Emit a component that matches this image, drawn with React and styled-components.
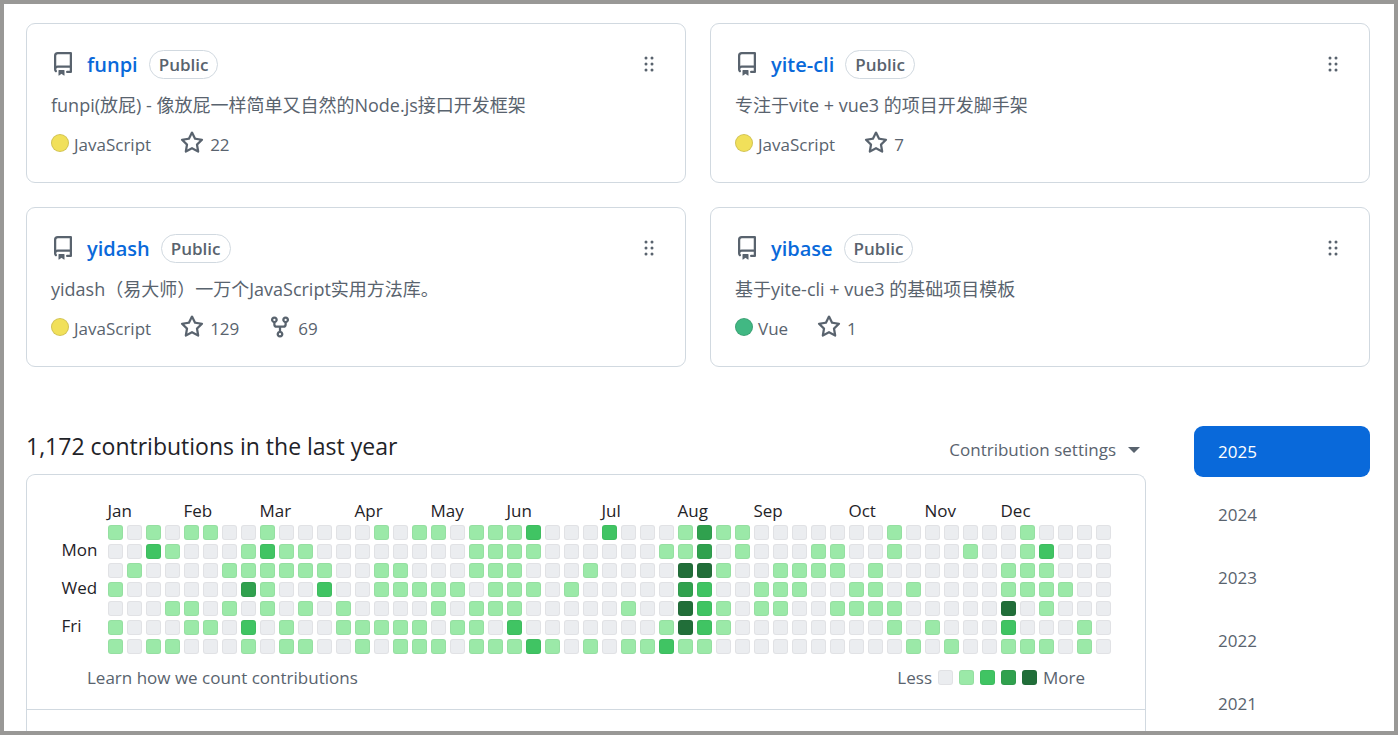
import { useState } from "react";
import styled, { createGlobalStyle } from "styled-components";

const repos = [
	{ name: "funpi", description: "funpi(放屁) - 像放屁一样简单又自然的Node.js接口开发框架", language: "JavaScript", color: "#f1e05a", stars: 22 },
	{ name: "yite-cli", description: "专注于vite + vue3 的项目开发脚手架", language: "JavaScript", color: "#f1e05a", stars: 7 },
	{ name: "yidash", description: "yidash（易大师）一万个JavaScript实用方法库。", language: "JavaScript", color: "#f1e05a", stars: 129, forks: 69 },
	{ name: "yibase", description: "基于yite-cli + vue3 的基础项目模板", language: "Vue", color: "#41b883", stars: 1 },
];

const years = [2025, 2024, 2023, 2022, 2021];

const months = [
	["Jan", 4], ["Feb", 4], ["Mar", 5], ["Apr", 4], ["May", 4], ["Jun", 5],
	["Jul", 4], ["Aug", 4], ["Sep", 5], ["Oct", 4], ["Nov", 4], ["Dec", 6],
];

// one digit per week, 0 = no contributions, 4 = the most
const days = [
	{ label: "", levels: "10101100100000101101112000200013110000000100000010000" },
	{ label: "Mon", levels: "00210001211000000001111000000113010001100100010012000" },
	{ label: "", levels: "01000011111100110001110001000044100111101000000111000" },
	{ label: "Wed", levels: "10000003100200111110111010000032001110011010000111100" },
	{ label: "", levels: "00011010101010000101110000010042101100111100000401000" },
	{ label: "Fri", levels: "10001102010011111011020000000142100000000101000200010" },
	{ label: "", levels: "10110001011001011101112101011211000000000010100111010" },
];

const levelColors = ["#ebedf0", "#9be9a8", "#40c463", "#30a14e", "#216e39"];

const icons = {
	repo: "M2 2.5A2.5 2.5 0 0 1 4.5 0h8.75a.75.75 0 0 1 .75.75v12.5a.75.75 0 0 1-.75.75h-2.5a.75.75 0 0 1 0-1.5h1.75v-2h-8a1 1 0 0 0-.714 1.7.75.75 0 1 1-1.072 1.05A2.495 2.495 0 0 1 2 11.5Zm10.5-1h-8a1 1 0 0 0-1 1v6.708A2.486 2.486 0 0 1 4.5 9h8ZM5 12.25a.25.25 0 0 1 .25-.25h3.5a.25.25 0 0 1 .25.25v3.25a.25.25 0 0 1-.4.2l-1.45-1.087a.249.249 0 0 0-.3 0L5.4 15.7a.25.25 0 0 1-.4-.2Z",
	star: "M8 .25a.75.75 0 0 1 .673.418l1.882 3.815 4.21.612a.75.75 0 0 1 .416 1.279l-3.046 2.97.719 4.192a.751.751 0 0 1-1.088.791L8 12.347l-3.766 1.98a.75.75 0 0 1-1.088-.79l.72-4.194L.818 6.374a.75.75 0 0 1 .416-1.28l4.21-.611L7.327.668A.75.75 0 0 1 8 .25Zm0 2.445L6.615 5.5a.75.75 0 0 1-.564.41l-3.097.45 2.24 2.184a.75.75 0 0 1 .216.664l-.528 3.084 2.769-1.456a.75.75 0 0 1 .698 0l2.77 1.456-.53-3.084a.75.75 0 0 1 .216-.664l2.24-2.183-3.096-.45a.75.75 0 0 1-.564-.41L8 2.694Z",
	fork: "M5 5.372v.878c0 .414.336.75.75.75h4.5a.75.75 0 0 0 .75-.75v-.878a2.25 2.25 0 1 1 1.5 0v.878a2.25 2.25 0 0 1-2.25 2.25h-1.5v2.128a2.251 2.251 0 1 1-1.5 0V8.5h-1.5A2.25 2.25 0 0 1 3.5 6.25v-.878a2.25 2.25 0 1 1 1.5 0ZM5 3.25a.75.75 0 1 0-1.5 0 .75.75 0 0 0 1.5 0Zm6.75.75a.75.75 0 1 0 0-1.5.75.75 0 0 0 0 1.5Zm-3 8.75a.75.75 0 1 0-1.5 0 .75.75 0 0 0 1.5 0Z",
	grabber: "M10 13a1 1 0 1 1 0-2 1 1 0 0 1 0 2Zm0-4a1 1 0 1 1 0-2 1 1 0 0 1 0 2Zm-4 4a1 1 0 1 1 0-2 1 1 0 0 1 0 2Zm5-9a1 1 0 1 1-2 0 1 1 0 0 1 2 0ZM7 8a1 1 0 1 1-2 0 1 1 0 0 1 2 0ZM6 5a1 1 0 1 1 0-2 1 1 0 0 1 0 2Z",
};

function Icon({ name }) {
	return (
		<Svg viewBox="0 0 16 16" aria-hidden="true">
			<path d={icons[name]} />
		</Svg>
	)
}

function RepoCard({ repo }) {
	return (
		<Card>
			<CardHeader>
				<Icon name="repo" />
				<RepoName href={`#${repo.name}`}>{repo.name}</RepoName>
				<Badge>Public</Badge>
				<GrabButton type="button" aria-label={`Reorder ${repo.name}`}>
					<Icon name="grabber" />
				</GrabButton>
			</CardHeader>
			<Description>{repo.description}</Description>
			<Stats>
				<Language>
					<Dot color={repo.color} />
					{repo.language}
				</Language>
				<Stat href="#stargazers"><Icon name="star" />{repo.stars}</Stat>
				{repo.forks && <Stat href="#forks"><Icon name="fork" />{repo.forks}</Stat>}
			</Stats>
		</Card>
	)
}

function Calendar() {
	return (
		<CalendarTable aria-label="Contributions by day">
			<thead>
				<tr>
					<DayLabel as="td" />
					{months.map(([month, weeks]) => (
						<MonthLabel key={month} colSpan={weeks} scope="colgroup">{month}</MonthLabel>
					))}
				</tr>
			</thead>
			<tbody>
				{days.map((day, index) => (
					<tr key={index}>
						<DayLabel scope="row">{day.label}</DayLabel>
						{[...day.levels].map((level, week) => <Day key={week} $level={level} />)}
					</tr>
				))}
			</tbody>
		</CalendarTable>
	)
}

export default function App() {
	const [year, setYear] = useState(2025)

	return (
		<Page>
			<GlobalStyle />
			<Repos>
				{repos.map((repo) => <RepoCard key={repo.name} repo={repo} />)}
			</Repos>

			<Activity>
				<Contributions>
					<ContributionsHeader>
						<Title>1,172 contributions in the last year</Title>
						<SettingsButton type="button">
							Contribution settings
							<Caret />
						</SettingsButton>
					</ContributionsHeader>
					<Panel>
						<Calendar />
						<PanelFooter>
							<HelpLink href="#help">Learn how we count contributions</HelpLink>
							<Legend>
								Less
								{levelColors.map((color, level) => <LegendCell key={color} $level={level} />)}
								More
							</Legend>
						</PanelFooter>
					</Panel>
				</Contributions>

				<Years>
					{years.map((item) => (
						<YearButton key={item} type="button" $active={item === year} onClick={() => setYear(item)}>
							{item}
						</YearButton>
					))}
				</Years>
			</Activity>
		</Page>
	)
}

const GlobalStyle = createGlobalStyle`
	* {
		box-sizing: border-box;
	}

	body {
		margin: 0;
		background: #ffffff;
		color: #1f2328;
		font-family: "Open Sans", "Noto Sans CJK SC", sans-serif;
		font-size: 17px;
		line-height: 27px;
	}

	a {
		text-decoration: none;
	}

	button {
		border: 0;
		padding: 0;
		background: none;
		font: inherit;
		cursor: pointer;
	}
`

const Page = styled.main`
	display: flex;
	flex-direction: column;
	min-height: 100vh;
	padding: 19px 24px 0 22px;
	border: 4px solid #999896;
`

const Repos = styled.section`
	display: grid;
	grid-template-columns: repeat(2, minmax(0, 1fr));
	gap: 24px;
`

const Card = styled.article`
	display: flex;
	flex-direction: column;
	gap: 12px;
	padding: 24px;
	border: 1px solid #d1d9e0;
	border-radius: 9px;
	color: #59636e;
`

const CardHeader = styled.div`
	display: flex;
	align-items: center;
	height: 32px;
`

const Svg = styled.svg`
	flex: none;
	width: 24px;
	height: 24px;
	fill: #59636e;
`

const RepoName = styled.a`
	margin: 0 11px 0 12px;
	color: #0969da;
	font-size: 20px;
	font-weight: 600;
`

const Badge = styled.span`
	padding: 0 9px;
	border: 1px solid #d1d9e0;
	border-radius: 15px;
	font-weight: 600;
`

const GrabButton = styled.button`
	display: flex;
	margin-left: auto;
	cursor: grab;
`

const Description = styled.p`
	margin: 0;
	font-size: 18px;
`

const Stats = styled.div`
	display: flex;
	align-items: flex-start;
	gap: 29px;
`

const Language = styled.span`
	display: flex;
	align-items: flex-start;
	gap: 5px;
`

const Dot = styled.span`
	width: 18px;
	height: 18px;
	margin-top: 3px;
	border: 1px solid rgba(31, 35, 40, 0.15);
	border-radius: 50%;
	background: ${props => props.color};
`

const Stat = styled.a`
	display: flex;
	align-items: flex-start;
	gap: 6px;
	color: #59636e;
`

const Activity = styled.section`
	display: flex;
	flex: 1;
	gap: 48px;
	margin-top: 59px;
`

const Contributions = styled.div`
	display: flex;
	flex: 1;
	flex-direction: column;
	min-width: 0;
`

const ContributionsHeader = styled.div`
	display: flex;
	align-items: flex-end;
	justify-content: space-between;
	padding-bottom: 8px;
`

const Title = styled.h2`
	margin: 0;
	font-size: 23px;
	font-weight: 400;
	line-height: 40px;
`

const SettingsButton = styled.button`
	display: flex;
	align-items: center;
	gap: 12px;
	padding-right: 6px;
	color: #59636e;
	line-height: 32px;
`

const Caret = styled.span`
	border: 6px solid transparent;
	border-top-color: #59636e;
	border-bottom: 0;
`

const Panel = styled.div`
	flex: 1;
	padding-top: 21px;
	border: 1px solid #d1d9e0;
	border-bottom: 0;
	border-radius: 9px 9px 0 0;
`

const CalendarTable = styled.table`
	margin: 0 auto;
	border-spacing: 4px;

	th, td {
		padding: 0;
	}
`

const MonthLabel = styled.th`
	height: 21px;
	font-weight: 400;
	line-height: 21px;
	text-align: left;
`

const DayLabel = styled.th`
	width: 42px;
	min-width: 42px;
	font-weight: 400;
	line-height: 11px;
	text-align: left;
	vertical-align: top;
`

const Day = styled.td`
	width: 15px;
	min-width: 15px;
	height: 15px;
	border: 1px solid rgba(31, 35, 40, 0.05);
	border-radius: 3px;
	background: ${props => levelColors[props.$level]};
`

const LegendCell = styled.span`
	width: 15px;
	height: 15px;
	border: 1px solid rgba(31, 35, 40, 0.05);
	border-radius: 3px;
	background: ${props => levelColors[props.$level]};
`

const PanelFooter = styled.div`
	display: flex;
	justify-content: space-between;
	padding: 6px 60px 18px;
	border-bottom: 1px solid #d1d9e0;
	color: #59636e;
`

const HelpLink = styled.a`
	color: #59636e;
`

const Legend = styled.div`
	display: flex;
	align-items: center;
	gap: 6px;
`

const Years = styled.nav`
	display: flex;
	flex: none;
	flex-direction: column;
	gap: 12px;
	width: 176px;
`

const YearButton = styled.button`
	padding: 12px 24px;
	border-radius: 9px;
	background: ${props => props.$active ? "#0969da" : "transparent"};
	color: ${props => props.$active ? "#ffffff" : "#59636e"};
	text-align: left;
`
